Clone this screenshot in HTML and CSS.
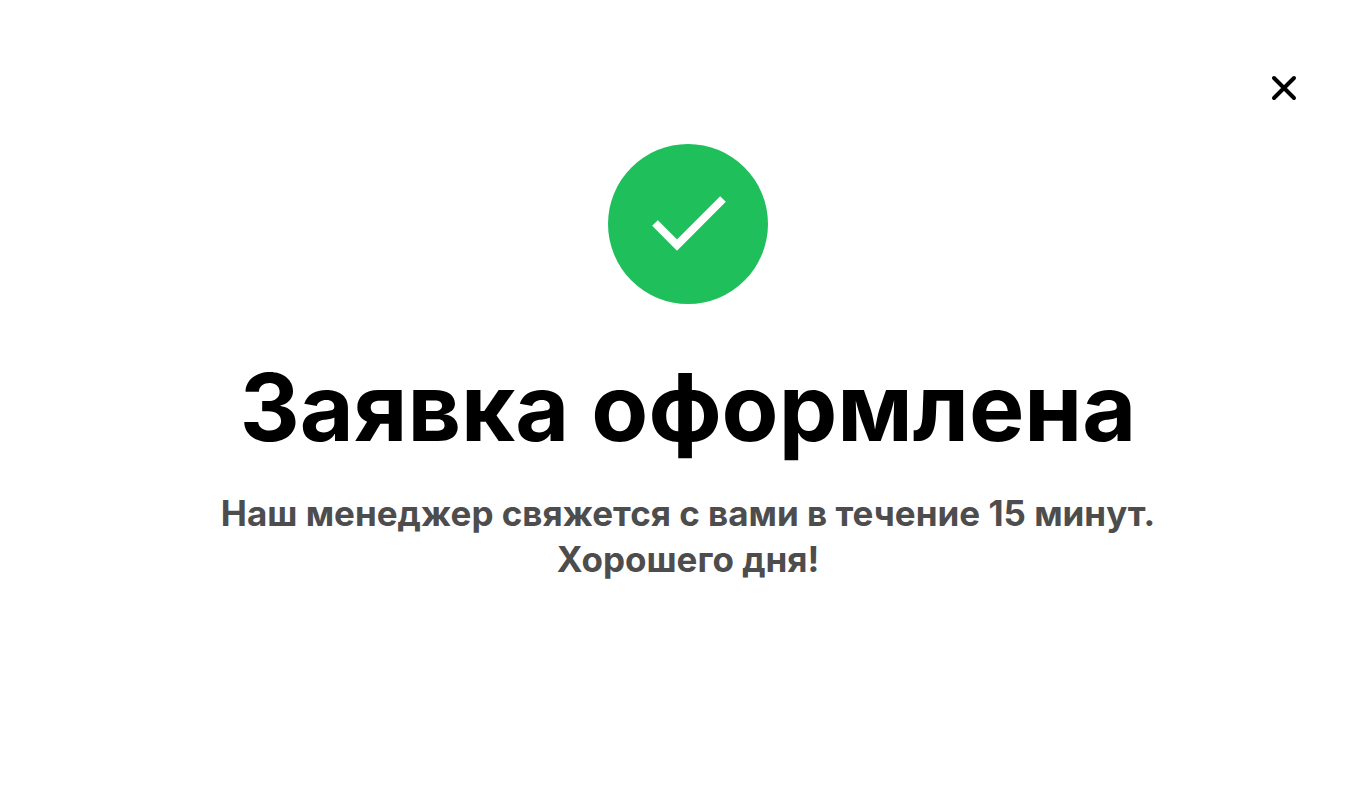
FILE: index.html
```html
<!DOCTYPE html>
<html lang="ru">
<head>
    <meta charset="UTF-8">
    <meta name="viewport" content="width=device-width, initial-scale=1.0">
    <title>Заявка оформлена</title>
    <link rel="stylesheet" href="styles.css">
</head>
<body>
    <main class="modal">
        <button class="modal-close" type="button" aria-label="Закрыть">
            <svg width="26" height="26" viewBox="0 0 26 26" fill="none" stroke="currentColor" stroke-width="4" stroke-linecap="round">
                <path d="M3 3L23 23M23 3L3 23"/>
            </svg>
        </button>
        <svg class="modal-icon" width="160" height="160" viewBox="0 0 160 160" fill="none" aria-hidden="true">
            <circle cx="80" cy="80" r="80" fill="#1fbf5c"/>
            <path d="M47 79L69 101L115 55" stroke="#fff" stroke-width="8"/>
        </svg>
        <h1 class="modal-title">Заявка оформлена</h1>
        <p class="modal-text">Наш менеджер свяжется с вами в течение 15 минут.<br>Хорошего дня!</p>
    </main>
</body>
</html>
```

FILE: styles.css
```css
body {
    margin: 0;
    background-color: #fff;
    font-family: Inter, "Liberation Sans", sans-serif;
    color: #000;
}
.modal {
    display: flex;
    flex-direction: column;
    align-items: center;
    padding: 75px 73px 80px 79px;
    text-align: center;
}
.modal-close {
    display: flex;
    align-self: flex-end;
    padding: 0;
    border: none;
    background: none;
    color: inherit;
    cursor: pointer;
}
.modal-icon {
    margin-top: 43px;
}
.modal-title {
    margin: 48px 0 0;
    font-size: 93px;
    font-weight: 700;
    line-height: 110px;
}
.modal-text {
    margin: 28px 0 0;
    color: #4d4d4d;
    font-size: 35px;
    font-weight: 700;
    line-height: 46px;
}
```
